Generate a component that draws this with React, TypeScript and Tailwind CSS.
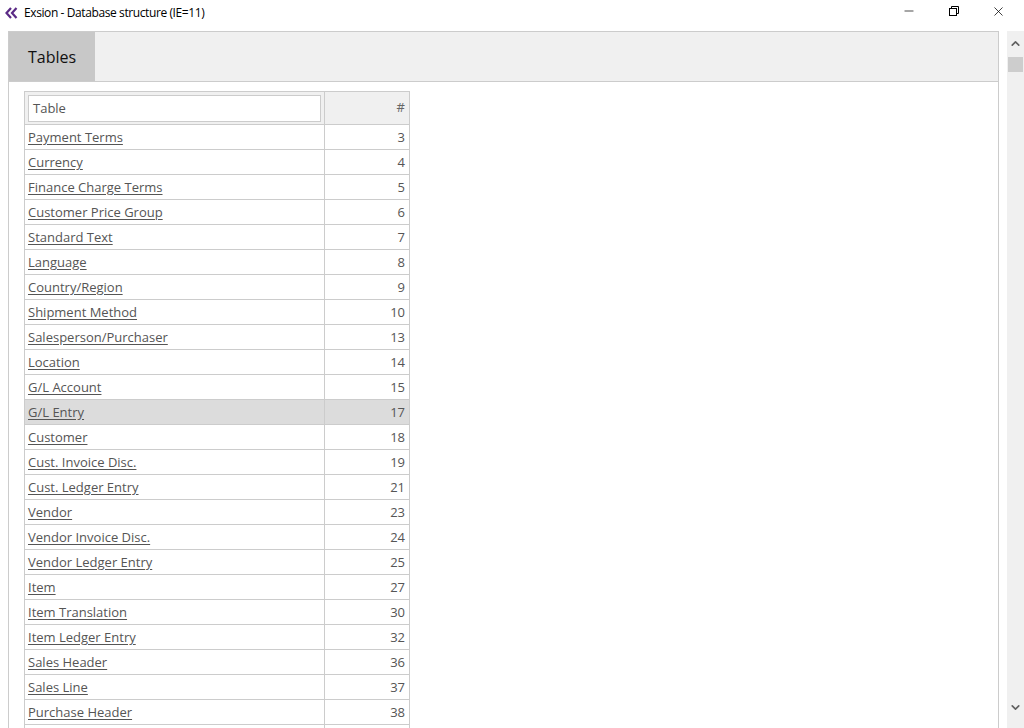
// App.tsx — Exsion database structure window
import { Minus, X, ChevronUp, ChevronDown } from 'lucide-react';

const rows: [string, number][] = [
  ['Payment Terms', 3],
  ['Currency', 4],
  ['Finance Charge Terms', 5],
  ['Customer Price Group', 6],
  ['Standard Text', 7],
  ['Language', 8],
  ['Country/Region', 9],
  ['Shipment Method', 10],
  ['Salesperson/Purchaser', 13],
  ['Location', 14],
  ['G/L Account', 15],
  ['G/L Entry', 17],
  ['Customer', 18],
  ['Cust. Invoice Disc.', 19],
  ['Cust. Ledger Entry', 21],
  ['Vendor', 23],
  ['Vendor Invoice Disc.', 24],
  ['Vendor Ledger Entry', 25],
  ['Item', 27],
  ['Item Translation', 30],
  ['Item Ledger Entry', 32],
  ['Sales Header', 36],
  ['Sales Line', 37],
  ['Purchase Header', 38],
];

function AppIcon() {
  return (
    <svg width="13" height="12" viewBox="0 0 13 12">
      <path d="M6 1 L1.5 6 L6 11" fill="none" stroke="#5b2a86" strokeWidth="2.2" />
      <path d="M11.5 1 L7 6 L11.5 11" fill="none" stroke="#5b2a86" strokeWidth="2.2" />
    </svg>
  );
}

function RestoreIcon() {
  return (
    <svg width="10" height="10" viewBox="0 0 10 10">
      <rect x="0.5" y="2.5" width="7" height="7" fill="none" stroke="#000" />
      <path d="M2.5 2.5 V0.5 H9.5 V7.5 H7.5" fill="none" stroke="#000" />
    </svg>
  );
}

export default function App() {
  return (
    <div className="h-[728px] w-[1024px] overflow-hidden bg-white text-black" style={{ fontFamily: '"Open Sans", "Noto Sans", sans-serif' }}>
      {/* Title bar */}
      <div className="flex h-[31px] items-start">
        <div className="flex h-[25px] items-center gap-[6px] pl-[5px]">
          <AppIcon />
          <span className="text-[12px] tracking-[-0.4px] text-black">Exsion - Database structure (IE=11)</span>
        </div>
        <div className="ml-auto mr-[3px] flex">
          <div className="flex h-[22px] w-[45px] items-center justify-center"><Minus className="h-[14px] w-[14px]" strokeWidth={1.2} /></div>
          <div className="flex h-[22px] w-[45px] items-center justify-center"><RestoreIcon /></div>
          <div className="flex h-[22px] w-[45px] items-center justify-center"><X className="h-[15px] w-[15px]" strokeWidth={1.2} /></div>
        </div>
      </div>

      <div className="flex h-[697px]">
        {/* Main panel */}
        <div className="ml-2 mr-2 flex-1 overflow-hidden border-l border-r border-t border-[#cccccc]">
          <div className="flex h-[50px] border-b border-[#cccccc] bg-[#f0f0f0]">
            <div className="flex w-[86px] items-center justify-center bg-[#c8c8c8] text-[16px] text-[#111]">Tables</div>
          </div>
          <div className="pl-[15px] pt-[9px]">
            <table className="w-[386px] border-collapse text-[13px] text-[#555]">
              <thead>
                <tr className="h-[33px] bg-[#f0f0f0]">
                  <th className="w-[300px] border border-[#cccccc] p-0 px-[3px] text-left font-normal">
                    <div className="flex h-[27px] items-center border border-[#cccccc] bg-white pl-[4px] pt-[1px] text-[#555]">Table</div>
                  </th>
                  <th className="border border-[#cccccc] pr-[4px] text-right align-middle font-normal text-[#666]">#</th>
                </tr>
              </thead>
              <tbody>
                {rows.map(([name, num]) => (
                  <tr key={name} className={`h-[25px] ${name === 'G/L Entry' ? 'bg-[#dcdcdc]' : ''}`}>
                    <td className="border border-[#cccccc] px-[3px] pb-0 pt-[1px]">
                      <span className="underline decoration-[#555] underline-offset-2">{name}</span>
                    </td>
                    <td className="border border-[#cccccc] pb-0 pt-[1px] pr-[4px] text-right">{num}</td>
                  </tr>
                ))}
                <tr className="h-[25px]">
                  <td className="border border-[#cccccc]" />
                  <td className="border border-[#cccccc]" />
                </tr>
              </tbody>
            </table>
          </div>
        </div>

        {/* Scrollbar */}
        <div className="flex w-[17px] flex-col items-center bg-[#f0f0f0]">
          <ChevronUp className="mt-[6px] h-[13px] w-[13px] text-[#606060]" strokeWidth={3} />
          <div className="mt-[7px] h-[15px] w-[15px] bg-[#cdcdcd]" />
          <div className="flex-1" />
          <ChevronDown className="mb-[14px] h-[13px] w-[13px] text-[#606060]" strokeWidth={3} />
        </div>
      </div>
    </div>
  );
}
